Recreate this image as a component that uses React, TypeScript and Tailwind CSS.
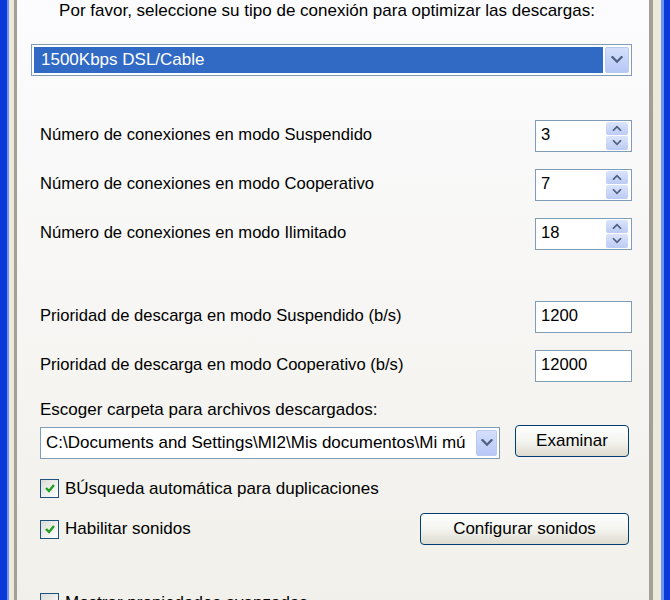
import * as React from "react";

function Chevron({ up = false, className = "" }: { up?: boolean; className?: string }) {
  return (
    <svg viewBox="0 0 10 7" className={className}>
      <path
        d={up ? "M1 6 L5 2 L9 6" : "M1 1 L5 5 L9 1"}
        fill="none"
        stroke="#4d6185"
        strokeWidth="2"
        strokeLinecap="square"
      />
    </svg>
  );
}

function DropButton({ className = "" }: { className?: string }) {
  return (
    <div className={"flex items-center justify-center rounded-[2px] border border-[#b9c9ef] bg-gradient-to-b from-[#d4dffb] to-[#b7c8f6] " + className}>
      <Chevron className="w-[12px] h-[8px]" />
    </div>
  );
}

function Spin({ value }: { value: string }) {
  return (
    <div className="flex h-[32px] w-[97px] items-center border border-[#7f9db9] bg-white pl-[5px] pr-[3px]">
      <span className="flex-1 text-black">{value}</span>
      <div className="flex h-[28px] w-[22px] flex-col gap-[1px]">
        <div className="flex flex-1 items-center justify-center rounded-[2px] bg-gradient-to-b from-[#dbe4fb] to-[#bccbf4]">
          <Chevron up className="w-[10px] h-[6px]" />
        </div>
        <div className="flex flex-1 items-center justify-center rounded-[2px] bg-gradient-to-b from-[#dbe4fb] to-[#bccbf4]">
          <Chevron className="w-[10px] h-[6px]" />
        </div>
      </div>
    </div>
  );
}

function NumberBox({ value }: { value: string }) {
  return (
    <div className="flex h-[32px] w-[97px] items-center border border-[#7f9db9] bg-white pl-[5px]">
      <span className="text-black">{value}</span>
    </div>
  );
}

function Check({ checked }: { checked: boolean }) {
  return (
    <div className="flex h-[19px] w-[19px] shrink-0 items-center justify-center border border-[#1c5180] bg-gradient-to-br from-[#dcdcd7] to-[#ffffff]">
      {checked && (
        <svg viewBox="0 0 12 12" className="h-[12px] w-[12px]">
          <path d="M2 6 L5 9 L10 3" fill="none" stroke="#21a121" strokeWidth="2.4" />
        </svg>
      )}
    </div>
  );
}

function XpButton({ label, className = "" }: { label: string; className?: string }) {
  return (
    <div className={"mr-[3px] flex h-[32px] items-center justify-center rounded-[4px] border border-[#003c74] bg-gradient-to-b from-[#ffffff] via-[#f4f4f0] to-[#dedbd0] text-black " + className}>
      {label}
    </div>
  );
}

const rows = [
  { label: "Número de conexiones en modo Suspendido", value: "3" },
  { label: "Número de conexiones en modo Cooperativo", value: "7" },
  { label: "Número de conexiones en modo Ilimitado", value: "18" },
];

export default function App() {
  return (
    <div className="flex h-[600px] w-[670px] overflow-hidden font-['Liberation_Sans',Arial,sans-serif] text-[17px] text-black">
      {/* window frame, left side */}
      <div className="w-[7px] bg-[#0a3ad8]" />
      <div className="w-[2px] bg-[#6d94f0]" />
      <div className="w-[5px] bg-[#ece9d8]" />
      <div className="w-[3px] bg-[#a19f97]" />

      {/* tab page */}
      <div className="flex flex-1 flex-col bg-gradient-to-b from-[#fcfcfe] to-[#f1f0ea] pl-[23px] pr-[17px]">
        <div className="h-[22px] pr-[18px] text-center leading-[22px]">
          Por favor, seleccione su tipo de conexión para optimizar las descargas:
        </div>

        <div className="-ml-[9px] mt-[22px] flex h-[32px] items-center border border-[#7f9db9] bg-white p-[2px]">
          <div className="flex h-full flex-1 items-center bg-[#316ac5] pl-[7px] text-white">1500Kbps DSL/Cable</div>
          <DropButton className="ml-[2px] h-full w-[24px]" />
        </div>

        <div className="mt-[44px] flex flex-col gap-[17px] text-[16.6px]">
          {rows.map((r) => (
            <div key={r.label} className="flex items-center justify-between">
              <span>{r.label}</span>
              <Spin value={r.value} />
            </div>
          ))}
        </div>

        <div className="mt-[51px] flex flex-col gap-[17px] text-[16.6px]">
          <div className="flex items-center justify-between">
            <span>Prioridad de descarga en modo Suspendido (b/s)</span>
            <NumberBox value="1200" />
          </div>
          <div className="flex items-center justify-between">
            <span>Prioridad de descarga en modo Cooperativo (b/s)</span>
            <NumberBox value="12000" />
          </div>
        </div>

        <div className="mt-[18px] h-[20px] leading-[20px]">Escoger carpeta para archivos descargados:</div>

        <div className="mt-[4px] flex items-center justify-between">
          <div className="mt-[3px] flex h-[32px] w-[460px] items-center border border-[#7f9db9] bg-white p-[2px]">
            <div className="flex-1 overflow-hidden whitespace-nowrap pl-[3px]">
              C:\Documents and Settings\MI2\Mis documentos\Mi mú
            </div>
            <DropButton className="h-full w-[21px]" />
          </div>
          <XpButton label="Examinar" className="w-[114px]" />
        </div>

        <div className="mt-[17px] flex items-center gap-[6px]">
          <Check checked />
          <span>BÚsqueda automática para duplicaciones</span>
        </div>

        <div className="mt-[12px] flex items-center justify-between">
          <div className="flex items-center gap-[6px]">
            <Check checked />
            <span>Habilitar sonidos</span>
          </div>
          <XpButton label="Configurar sonidos" className="w-[209px]" />
        </div>

        <div className="mt-[45px] flex items-center gap-[6px]">
          <Check checked={false} />
          <span>Mostrar propiedades avanzadas</span>
        </div>
      </div>

      {/* window frame, right side */}
      <div className="w-[4px] bg-[#a19f97]" />
      <div className="w-[8px] bg-[#ece9d8]" />
      <div className="w-[3px] bg-[#6d94f0]" />
      <div className="w-[6px] bg-[#0a3ad8]" />
    </div>
  );
}
